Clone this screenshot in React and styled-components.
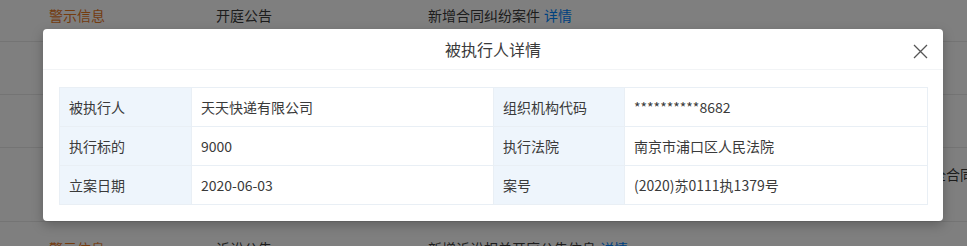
import React from 'react';
import styled, { createGlobalStyle } from 'styled-components';

const GlobalStyle = createGlobalStyle`
  html, body {
    margin: 0;
    padding: 0;
    background: #ffffff;
    overflow: hidden;
  }
  body {
    font-family: 'Noto Sans CJK SC', 'Noto Sans', sans-serif;
    color: #333333;
  }
`;

const Page = styled.div`
  position: relative;
  width: 967px;
  height: 246px;
  overflow: hidden;
`;

const List = styled.div`
  display: flex;
  flex-direction: column;
  margin-top: -11px;
`;

const Row = styled.div`
  display: grid;
  grid-template-columns: 167px 212px 539px;
  padding: 16px 0 15px 49px;
  border-bottom: 1px solid #e8e8e8;
  font-size: 14px;
  line-height: 21px;
`;

const Cell = styled.div`
  min-height: ${(p) => (p.$lines || 1) * 21}px;
  color: ${(p) => (p.$warn ? '#e8781f' : '#3a3a3a')};
  white-space: nowrap;
  overflow: hidden;
`;

const Link = styled.span`
  color: #0084ff;
  margin-left: 4px;
`;

const Watermark = styled.svg`
  position: absolute;
  left: 10px;
  top: 190px;
  opacity: 0.12;
`;

const Mask = styled.div`
  position: absolute;
  inset: 0;
  background: rgba(0, 0, 0, 0.5);
`;

const Modal = styled.div`
  position: absolute;
  top: 29px;
  left: 43px;
  width: 900px;
  background: #ffffff;
  border-radius: 4px;
  box-shadow: 0 4px 12px rgba(0, 0, 0, 0.25);
  display: flex;
  flex-direction: column;
`;

const Header = styled.div`
  position: relative;
  height: 40px;
  display: flex;
  align-items: center;
  justify-content: center;
  border-bottom: 1px solid #f2f4f6;
  font-size: 16px;
  color: #3a3a3a;
`;

const Close = styled.button`
  position: absolute;
  right: 15px;
  top: 14px;
  width: 16px;
  height: 16px;
  padding: 0;
  border: none;
  background: none;
  display: flex;
  align-items: center;
  justify-content: center;
  cursor: pointer;
`;

const Body = styled.div`
  padding: 17px 16px 16px;
`;

const Table = styled.table`
  width: 868px;
  border-collapse: collapse;
  table-layout: fixed;
  font-size: 14px;
  color: #3a3a3a;
`;

const Label = styled.td`
  height: 39px;
  padding: 0 9px;
  background: #eef5fc;
  border: 1px solid #e9eff5;
  box-sizing: border-box;
`;

const Value = styled.td`
  height: 39px;
  padding: 0 9px;
  background: #ffffff;
  border: 1px solid #e9eff5;
  box-sizing: border-box;
`;

const rows = [
  ['被执行人', '天天快递有限公司', '组织机构代码', '**********8682'],
  ['执行标的', '9000', '执行法院', '南京市浦口区人民法院'],
  ['立案日期', '2020-06-03', '案号', '(2020)苏0111执1379号'],
];

const bg = [
  { a: '警示信息', b: '开庭公告', c: '新增合同纠纷案件', link: true },
  { a: '警示信息', b: '法院公告', c: '新增合同纠纷公告', link: true },
  { a: '警示信息', b: '裁判文书', c: '新增买卖合同纠纷文书', link: true },
  {
    a: '警示信息',
    b: '立案信息',
    c: '新增建设工程施工合同纠纷、买卖合同纠纷、民间借贷纠纷、追偿权纠纷、财产保全合同纠纷案件',
    lines: 2,
  },
  { a: '警示信息', b: '诉讼公告', c: '新增诉讼相关开庭公告信息', link: true },
];

export default function App() {
  return (
    <>
      <GlobalStyle />
      <Page>
        <List>
          {bg.map((r, i) => (
            <Row key={i}>
              <Cell $warn $lines={r.lines}>{r.a}</Cell>
              <Cell $lines={r.lines}>{r.b}</Cell>
              <Cell $lines={r.lines}>
                {r.c}
                {r.link && <Link>详情</Link>}
              </Cell>
            </Row>
          ))}
        </List>
        <Watermark width="260" height="70" viewBox="0 0 260 70">
          <circle cx="50" cy="50" r="40" fill="none" stroke="#ffffff" strokeWidth="10" />
          <text
            x="120"
            y="62"
            fill="#ffffff"
            fontSize="22"
            fontWeight="700"
            fontFamily="Liberation Sans, sans-serif"
            transform="rotate(-18 120 62)"
          >
            TianYancha
          </text>
        </Watermark>
        <Mask />
        <Modal>
          <Header>
            被执行人详情
            <Close aria-label="关闭">
              <svg width="15" height="15" viewBox="0 0 15 15">
                <path d="M1 1L14 14M14 1L1 14" stroke="#555" strokeWidth="1.3" fill="none" />
              </svg>
            </Close>
          </Header>
          <Body>
            <Table>
              <colgroup>
                <col style={{ width: 132 }} />
                <col style={{ width: 302 }} />
                <col style={{ width: 131 }} />
                <col style={{ width: 303 }} />
              </colgroup>
              <tbody>
                {rows.map((r) => (
                  <tr key={r[0]}>
                    <Label>{r[0]}</Label>
                    <Value>{r[1]}</Value>
                    <Label>{r[2]}</Label>
                    <Value>{r[3]}</Value>
                  </tr>
                ))}
              </tbody>
            </Table>
          </Body>
        </Modal>
      </Page>
    </>
  );
}
